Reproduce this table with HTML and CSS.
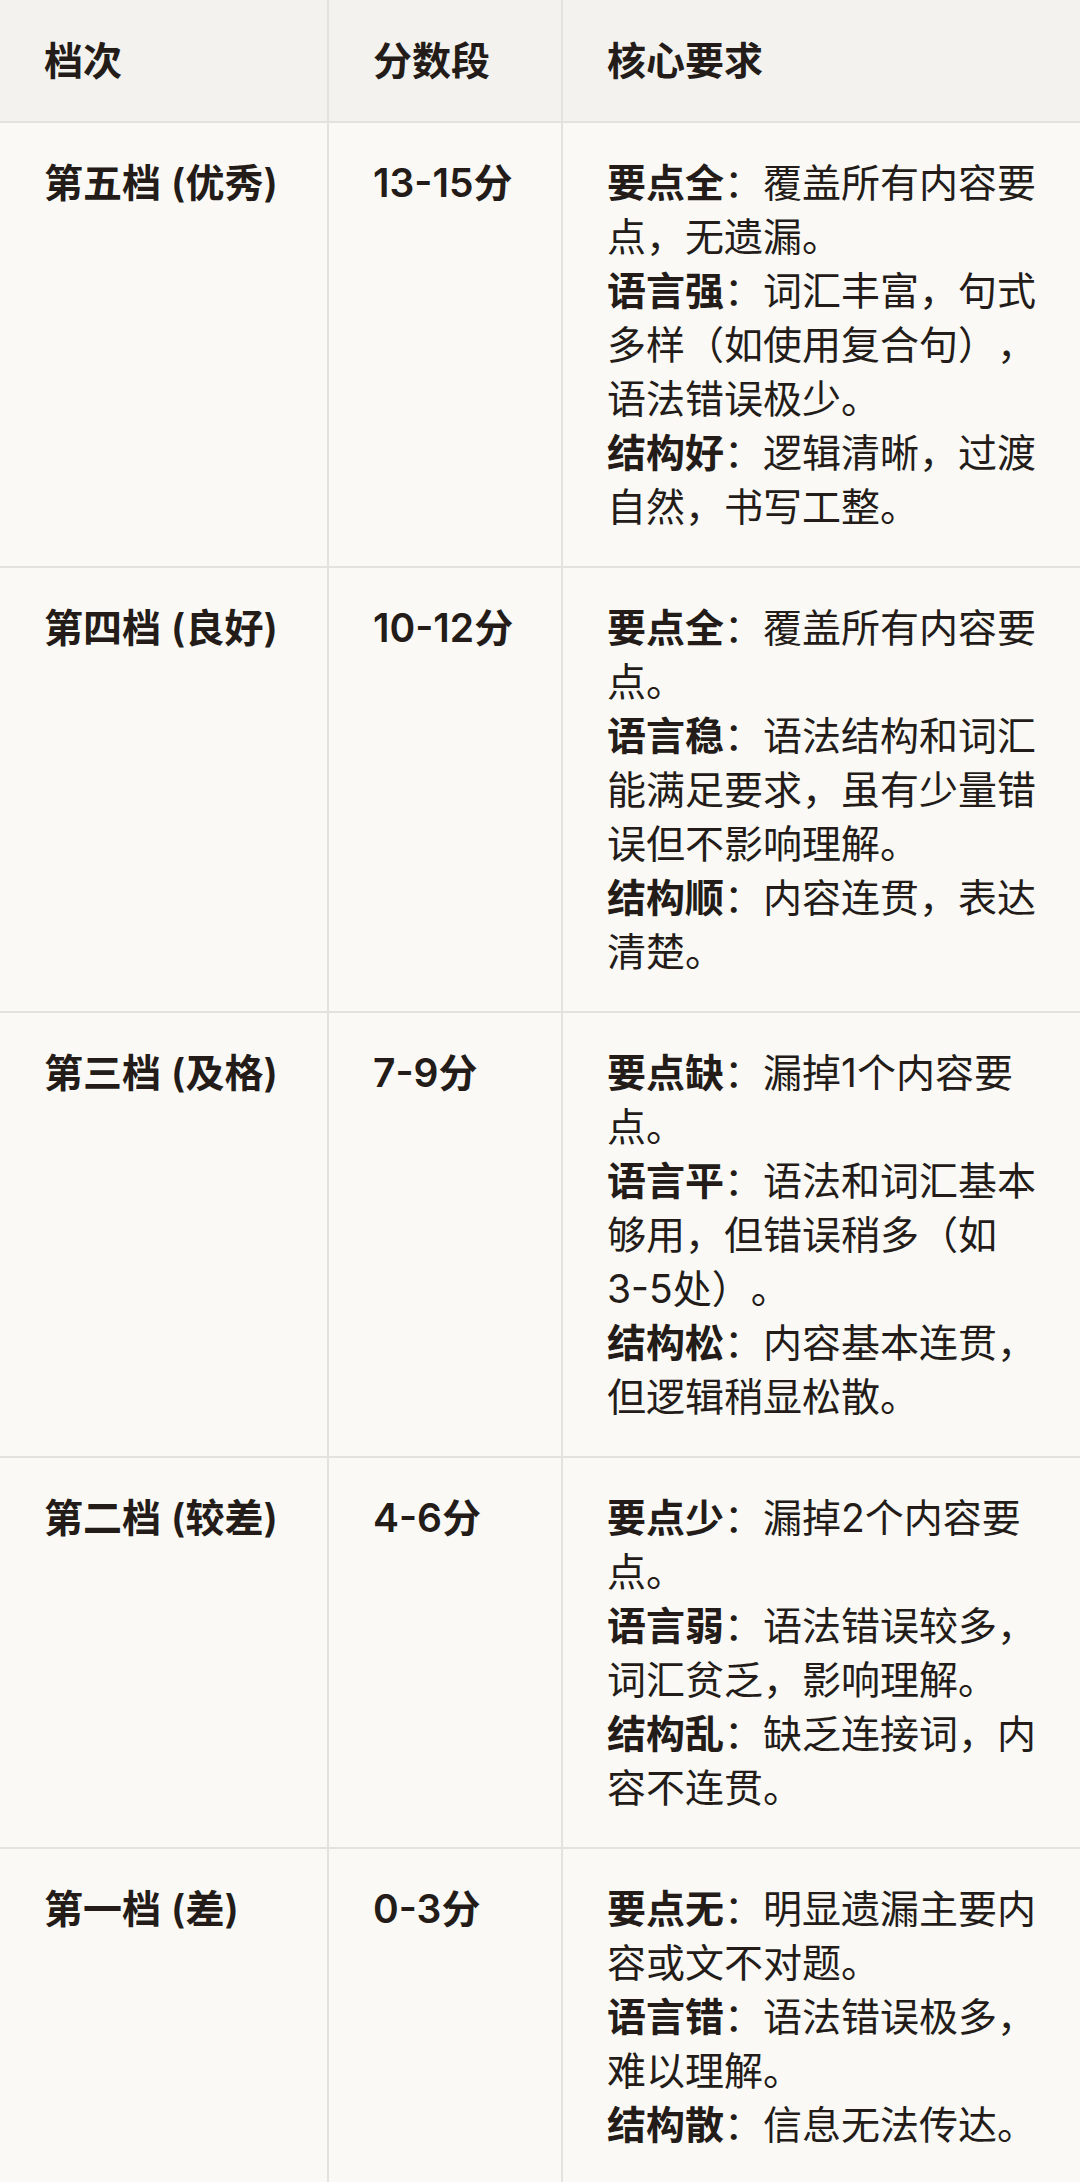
FILE: index.html
```html
<!DOCTYPE html>
<html lang="zh-CN">
<head>
<meta charset="utf-8">
<title>评分标准</title>
<link rel="stylesheet" href="styles.css">
</head>
<body>
<table class="grade-table">
  <colgroup>
    <col class="col-level">
    <col class="col-score">
    <col class="col-req">
  </colgroup>
  <thead>
    <tr>
      <th>档次</th>
      <th>分数段</th>
      <th>核心要求</th>
    </tr>
  </thead>
  <tbody>
    <tr>
      <td class="level">第五档 (优秀)</td>
      <td class="score">13-15分</td>
      <td class="req">
        <div class="item"><strong>要点全</strong>：覆盖所有内容要点，无遗漏。</div>
        <div class="item"><strong>语言强</strong>：词汇丰富，句式多样（如使用复合句），语法错误极少。</div>
        <div class="item"><strong>结构好</strong>：逻辑清晰，过渡自然，书写工整。</div>
      </td>
    </tr>
    <tr>
      <td class="level">第四档 (良好)</td>
      <td class="score">10-12分</td>
      <td class="req">
        <div class="item"><strong>要点全</strong>：覆盖所有内容要点。</div>
        <div class="item"><strong>语言稳</strong>：语法结构和词汇能满足要求，虽有少量错误但不影响理解。</div>
        <div class="item"><strong>结构顺</strong>：内容连贯，表达清楚。</div>
      </td>
    </tr>
    <tr>
      <td class="level">第三档 (及格)</td>
      <td class="score">7-9分</td>
      <td class="req">
        <div class="item"><strong>要点缺</strong>：漏掉1个内容要点。</div>
        <div class="item"><strong>语言平</strong>：语法和词汇基本够用，但错误稍多（如<span class="nw">3-5</span>处）。</div>
        <div class="item"><strong>结构松</strong>：内容基本连贯，但逻辑稍显松散。</div>
      </td>
    </tr>
    <tr>
      <td class="level">第二档 (较差)</td>
      <td class="score">4-6分</td>
      <td class="req">
        <div class="item"><strong>要点少</strong>：漏掉2个内容要点。</div>
        <div class="item"><strong>语言弱</strong>：语法错误较多，词汇贫乏，影响理解。</div>
        <div class="item"><strong>结构乱</strong>：缺乏连接词，内容不连贯。</div>
      </td>
    </tr>
    <tr>
      <td class="level">第一档 (差)</td>
      <td class="score">0-3分</td>
      <td class="req">
        <div class="item"><strong>要点无</strong>：明显遗漏主要内容或文不对题。</div>
        <div class="item"><strong>语言错</strong>：语法错误极多，难以理解。</div>
        <div class="item"><strong>结构散</strong>：信息无法传达。</div>
      </td>
    </tr>
  </tbody>
</table>
</body>
</html>
```

FILE: styles.css
```css
html, body {
  margin: 0;
  padding: 0;
  background: #faf9f6;
}

body {
  font-family: Inter, "Noto Sans CJK SC", sans-serif;
  font-size: 39px;
  line-height: 54px;
  color: #231c18;
  text-spacing-trim: space-all;
}

.grade-table {
  width: 1080px;
  table-layout: fixed;
  border-collapse: separate;
  border-spacing: 0;
}

.col-level { width: 329px; }
.col-score { width: 234px; }
.col-req { width: 517px; }

.grade-table th,
.grade-table td {
  box-sizing: border-box;
  text-align: left;
  vertical-align: top;
  border-bottom: 2px solid #e4e2de;
  border-right: 2px solid #e4e2de;
  padding: 33px 33px 32px 44px;
}

.grade-table th:last-child,
.grade-table td:last-child {
  border-right: none;
}

.grade-table th {
  background: #f3f2ef;
  font-weight: 600;
  padding-top: 34px;
  padding-bottom: 33px;
}

.grade-table td {
  background: #faf9f6;
}

.level,
.score {
  font-weight: 600;
}

.req {
  font-weight: 400;
}

.req strong {
  font-weight: 700;
}

.nw {
  white-space: nowrap;
}
```
